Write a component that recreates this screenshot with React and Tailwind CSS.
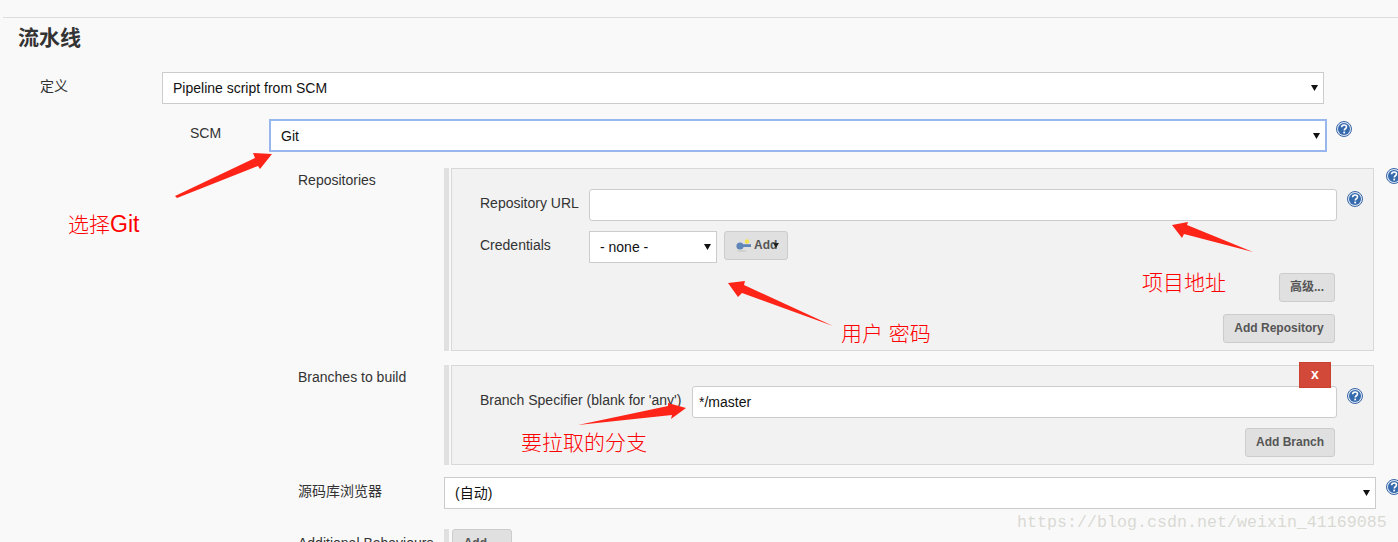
const cjk = '"Liberation Sans", "Noto Sans CJK SC", sans-serif';

const HelpIcon = ({ className = '' }) => (
  <svg viewBox="0 0 16 16" className={`h-4 w-4 shrink-0 ${className}`}>
    <circle cx="8" cy="8" r="7.5" fill="#dfe8f5" stroke="#3a66a8" strokeWidth="1" />
    <circle cx="8" cy="8" r="6" fill="#356aad" />
    <path d="M5.6 6.3c0-1.4 1.1-2.3 2.5-2.3s2.4.9 2.4 2c0 1.8-2.2 1.7-2.2 3.4" fill="none" stroke="#ffffff" strokeWidth="1.6" />
    <rect x="7.3" y="10.6" width="1.8" height="1.8" fill="#ffffff" />
  </svg>
);

const Caret = () => (
  <svg viewBox="0 0 7 6" className="h-[6px] w-[7px] shrink-0">
    <path d="M0 0h7L3.5 6z" fill="#111111" />
  </svg>
);

const Select = ({ value, className = '', padding = 'pl-[10px] pr-[5px]' }) => (
  <div className={`flex items-center justify-between bg-white text-sm text-[#111] ${padding} ${className}`}>
    <span>{value}</span>
    <Caret />
  </div>
);

const Btn = ({ children, className = '' }) => (
  <div className={`flex h-[29px] items-center justify-center rounded-[3px] border border-[#cccccc] bg-[#e0e0e0] pb-[2px] text-xs font-bold text-[#555555] ${className}`}>
    {children}
  </div>
);

const TextInput = ({ value, className = '' }) => (
  <div className={`flex h-8 items-center rounded-[3px] border border-[#cccccc] bg-white pl-[6px] text-sm text-[#111] ${className}`}>
    {value}
  </div>
);

const KeyIcon = () => (
  <svg viewBox="0 0 16 14" className="h-[14px] w-4 shrink-0">
    <ellipse cx="6" cy="13" rx="5" ry="1" fill="#d0d0d0" />
    <circle cx="11" cy="3.5" r="2.2" fill="#f3e24f" />
    <circle cx="4" cy="8" r="3.6" fill="#5f86b8" />
    <rect x="6" y="6.2" width="9" height="2.8" fill="#5f86b8" />
  </svg>
);

const Arrows = () => (
  <svg className="pointer-events-none absolute left-0 top-0 h-[542px] w-[1398px]" viewBox="0 0 1398 542">
    <g fill="#ff2418">
      <polygon points="175,196 255,158 253,153 272,154 260,169 258,166 177,198" />
      <polygon points="833,326 742,293 738,297 728,283 745,281 744,285" />
      <polygon points="1253,252 1184,234 1182,238 1172,225 1188,222 1187,225" />
      <polygon points="578,425 668,406 668,403 686,408 671,419 672,415" />
    </g>
  </svg>
);

const Note = ({ children, className = '' }) => (
  <div className={`pointer-events-none absolute whitespace-nowrap text-[21px] font-light leading-7 text-[#ff0000] ${className}`}>
    {children}
  </div>
);

export default function App() {
  return (
    <div className="relative h-[542px] w-[1398px] overflow-hidden bg-[#f9f9f9] pt-[17px] text-sm text-[#333333]" style={{ fontFamily: cjk }}>
      <div className="ml-[3px] border-t border-[#dddddd]" />
      <div className="mb-[14px] flex h-10 items-center pl-[18px] text-[21px] font-bold">流水线</div>

      <div className="flex pl-10">
        <div className="w-[122px] pt-1 text-sm leading-5">定义</div>
        <Select value="Pipeline script from SCM" className="h-8 w-[1162px] border border-[#cccccc]" />
      </div>

      <div className="mt-[15px] flex pl-[190px]">
        <div className="w-[79px] pt-1 leading-5">SCM</div>
        <Select value="Git" className="h-[33px] w-[1058px] border-2 border-[#98b7ee]" />
        <HelpIcon className="ml-[9px] mt-[2px]" />
      </div>

      <div className="mt-4 flex w-max pl-[298px]">
        <div className="w-[146px] pt-[2px] leading-5">Repositories</div>
        <div className="w-[5px] bg-[#e0e0e0]" />
        <div className="ml-[2px] h-[183px] w-[923px] border border-[#d8d8d8] bg-[#f2f2f2] pl-7 pt-5">
          <div className="flex">
            <div className="w-[109px] pt-1 leading-5">Repository URL</div>
            <TextInput className="w-[748px]" />
            <HelpIcon className="ml-[10px] mt-[2px]" />
          </div>
          <div className="mt-[10px] flex">
            <div className="w-[109px] pt-1 leading-5">Credentials</div>
            <Select value="- none -" className="h-8 w-32 border border-[#cccccc]" />
            <Btn className="relative ml-[7px] w-16 justify-start gap-[2px] pb-0 pl-[11px]">
              <KeyIcon />
              <span>Add</span>
              <div className="absolute left-[48px] top-[11px] h-0 w-0 border-x-[3px] border-t-[5px] border-x-transparent border-t-[#222222]" />
            </Btn>
          </div>
          <div className="mr-[38px] mt-[10px] flex justify-end">
            <Btn className="w-14">高级...</Btn>
          </div>
          <div className="mr-[38px] mt-3 flex justify-end">
            <Btn className="w-28">Add Repository</Btn>
          </div>
        </div>
        <HelpIcon className="ml-3 mt-0" />
      </div>

      <div className="mt-[14px] flex pl-[298px]">
        <div className="w-[146px] pt-[2px] leading-5">Branches to build</div>
        <div className="w-[5px] bg-[#e0e0e0]" />
        <div className="relative ml-[2px] h-[100px] w-[923px] border border-[#d8d8d8] bg-[#f2f2f2] pl-7 pt-5">
          <div className="flex">
            <div className="w-[212px] pt-1 leading-5">Branch Specifier (blank for &apos;any&apos;)</div>
            <TextInput value="*/master" className="w-[645px]" />
            <HelpIcon className="ml-[10px] mt-[2px]" />
          </div>
          <div className="mr-[38px] mt-[10px] flex justify-end">
            <Btn className="w-[90px]">Add Branch</Btn>
          </div>
          <div className="absolute -top-1 right-[42px] flex h-[26px] w-8 items-center justify-center border border-[#c9412f] bg-[#d24939] pb-[2px] text-sm font-bold text-white">
            x
          </div>
        </div>
      </div>

      <div className="mt-3 flex w-max pl-[298px]">
        <div className="w-[146px] pt-1 leading-5">源码库浏览器</div>
        <Select value="(自动)" className="h-8 w-[932px] border border-[#cccccc]" />
        <HelpIcon className="ml-[10px] mt-[2px]" />
      </div>

      <div className="mt-5 flex pl-[298px]">
        <div className="w-[146px] pt-1 leading-5">Additional Behaviours</div>
        <div className="w-[5px] bg-[#e0e0e0]" />
        <Btn className="ml-[3px] w-[60px] pb-0">Add ...</Btn>
      </div>

      <Arrows />
      <Note className="left-[68px] top-[210px]">选择<span className="text-[23px]">Git</span></Note>
      <Note className="left-[841px] top-[320px]">用户 密码</Note>
      <Note className="left-[1142px] top-[269px]">项目地址</Note>
      <Note className="left-[521px] top-[429px]">要拉取的分支</Note>
      <div className="pointer-events-none absolute left-[1017px] top-[513px] whitespace-nowrap text-[16.67px] leading-5 text-[#d9d9d4]" style={{ fontFamily: '"Liberation Mono", monospace' }}>
        https://blog.csdn.net/weixin_41169085
      </div>
    </div>
  );
}
